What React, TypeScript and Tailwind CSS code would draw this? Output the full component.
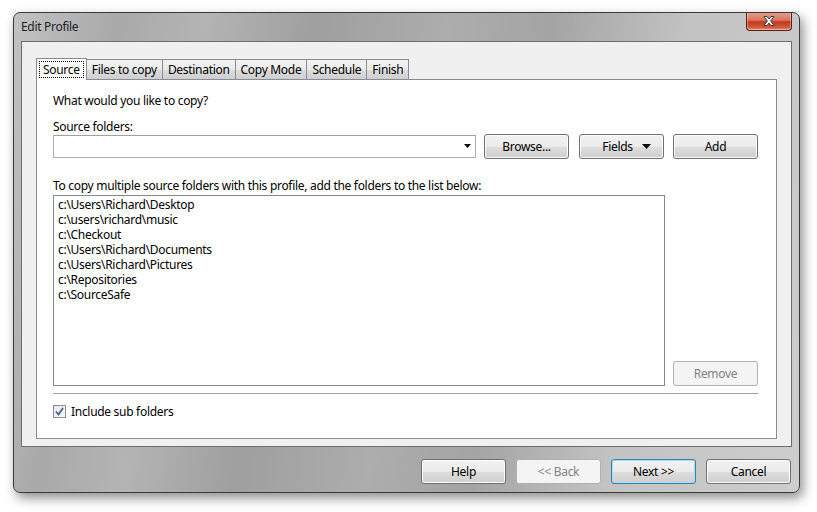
import React from "react";

const folders = [
  "c:\\Users\\Richard\\Desktop",
  "c:\\users\\richard\\music",
  "c:\\Checkout",
  "c:\\Users\\Richard\\Documents",
  "c:\\Users\\Richard\\Pictures",
  "c:\\Repositories",
  "c:\\SourceSafe",
];

const tabs = ["Source", "Files to copy", "Destination", "Copy Mode", "Schedule", "Finish"];

function WinButton({
  children,
  disabled,
  focused,
  className = "",
}: {
  children: React.ReactNode;
  disabled?: boolean;
  focused?: boolean;
  className?: string;
}) {
  if (disabled) {
    return (
      <div
        className={`h-[25px] w-[85px] rounded-[3px] border border-[#adb2b5] bg-[#f4f4f4] flex items-center justify-center text-[#838383] ${className}`}
      >
        {children}
      </div>
    );
  }
  return (
    <div
      className={`h-[25px] w-[85px] rounded-[3px] border ${
        focused ? "border-[#3c7fb1] shadow-[inset_0_0_0_1px_#a6dcf7]" : "border-[#707070] shadow-[inset_0_0_0_1px_#fcfcfc]"
      } bg-[linear-gradient(to_bottom,#f2f2f2_0%,#ebebeb_50%,#dddddd_51%,#cfcfcf_100%)] flex items-center justify-center text-black ${className}`}
    >
      {children}
    </div>
  );
}

export default function App() {
  return (
    <div
      className="w-[817px] h-[512px] bg-white pt-[12px] pl-[13px] text-[12px] leading-[15px] tracking-[-0.3px] text-black"
      style={{ fontFamily: '"Noto Sans", "Open Sans", sans-serif' }}
    >
      <div className="w-[787px] h-[481px] rounded-[7px] border border-[#3a3a3a] shadow-[3px_5px_12px_rgba(0,0,0,0.45)] bg-[linear-gradient(100deg,#c2c2c2_0%,#a9a9a9_12%,#b4b4b4_22%,#9f9f9f_35%,#adadad_50%,#a4a4a4_62%,#c3c3c3_78%,#cdcdcd_100%)] flex flex-col px-[7px] overflow-hidden">
        {/* title bar */}
        <div className="h-[28px] flex items-start justify-between shrink-0">
          <div className="pt-[6px] text-[12px] text-[#1e1e1e]">Edit Profile</div>
          <div className="w-[46px] h-[19px] -mt-px rounded-b-[4px] border border-[#5a1e14] border-t-0 bg-[linear-gradient(to_bottom,#e9a192_0%,#d87560_45%,#c3391d_55%,#d3593a_85%,#e8937c_100%)] flex items-center justify-center shadow-[inset_0_0_0_1px_rgba(255,255,255,0.35)]">
            <svg width="14" height="12" viewBox="0 0 14 12">
              <path
                d="M2 1.5 L5 1.5 L7 4 L9 1.5 L12 1.5 L8.6 6 L12 10.5 L9 10.5 L7 8 L5 10.5 L2 10.5 L5.4 6 Z"
                fill="#ffffff"
                stroke="#3f3f3f"
                strokeWidth="1"
                strokeLinejoin="round"
              />
            </svg>
          </div>
        </div>

        {/* client area */}
        <div className="h-[406px] border border-[#6e6e6e] bg-[#f0f0f0] pt-[15px] pl-[14px] pr-[14px] shrink-0">
          {/* tab strip */}
          <div className="flex items-end h-[22px]">
            {tabs.map((t, i) =>
              i === 0 ? (
                <div
                  key={t}
                  className="relative z-10 h-[22px] -mb-px px-[2px] border border-b-0 border-[#898c95] bg-white flex items-center"
                >
                  <span className="px-[3px] leading-[15px] border border-dotted border-black">{t}</span>
                </div>
              ) : (
                <div
                  key={t}
                  className="h-[20px] px-[5px] border border-b-0 border-l-0 border-[#898c95] bg-[linear-gradient(to_bottom,#f2f2f2_0%,#ebebeb_50%,#dddddd_51%,#cfcfcf_100%)] flex items-center"
                >
                  {t}
                </div>
              )
            )}
          </div>

          {/* panel */}
          <div className="h-[360px] border border-[#898c95] bg-white pl-[16px] pr-[17px] pt-[13px]">
            <div className="h-[15px]">What would you like to copy?</div>
            <div className="h-[15px] mt-[11px]">Source folders:</div>
            <div className="flex items-center mt-0 h-[24px]">
              <div className="w-[423px] h-[23px] border border-[#abadb3] border-t-[#a0a0a0] bg-white flex items-center justify-end pr-[4px]">
                <svg width="7" height="4" viewBox="0 0 7 4">
                  <path d="M0 0 L7 0 L3.5 4 Z" fill="#000" />
                </svg>
              </div>
              <WinButton className="ml-[8px] h-[24px]">Browse...</WinButton>
              <WinButton className="ml-[10px] h-[24px]">
                <span className="ml-[10px]">Fields</span>
                <svg className="ml-[9px]" width="9" height="5" viewBox="0 0 9 5">
                  <path d="M0 0 L9 0 L4.5 5 Z" fill="#000" />
                </svg>
              </WinButton>
              <WinButton className="ml-[9px] h-[24px]">Add</WinButton>
            </div>
            <div className="h-[15px] mt-[20px]">
              To copy multiple source folders with this profile, add the folders to the list below:
            </div>
            <div className="flex mt-[2px] h-[191px]">
              <div className="w-[612px] h-[191px] border border-[#828790] bg-white pt-px pl-[4px]">
                {folders.map((f) => (
                  <div key={f} className="h-[15px] leading-[15px] overflow-hidden">
                    {f}
                  </div>
                ))}
              </div>
              <div className="flex flex-col justify-end ml-[8px]">
                <WinButton disabled>Remove</WinButton>
              </div>
            </div>
            <div className="mt-[7px] h-px bg-[#a0a0a0] w-[705px]" />
            <div className="flex items-center mt-[10px] h-[15px]">
              <div className="w-[13px] h-[13px] border border-[#8e8f8f] bg-[linear-gradient(135deg,#e6e6e6,#fbfbfb)] flex items-center justify-center">
                <svg width="9" height="9" viewBox="0 0 9 9">
                  <path d="M1 4.5 L3.5 7.5 L8 1" fill="none" stroke="#4a5f97" strokeWidth="1.8" />
                </svg>
              </div>
              <span className="ml-[5px]">Include sub folders</span>
            </div>
          </div>
        </div>

        {/* bottom glass button row */}
        <div className="flex justify-end gap-[10px] pt-[12px] pr-[1px]">
          <WinButton>Help</WinButton>
          <WinButton disabled>&lt;&lt; Back</WinButton>
          <WinButton focused>Next &gt;&gt;</WinButton>
          <WinButton>Cancel</WinButton>
        </div>
      </div>
    </div>
  );
}
